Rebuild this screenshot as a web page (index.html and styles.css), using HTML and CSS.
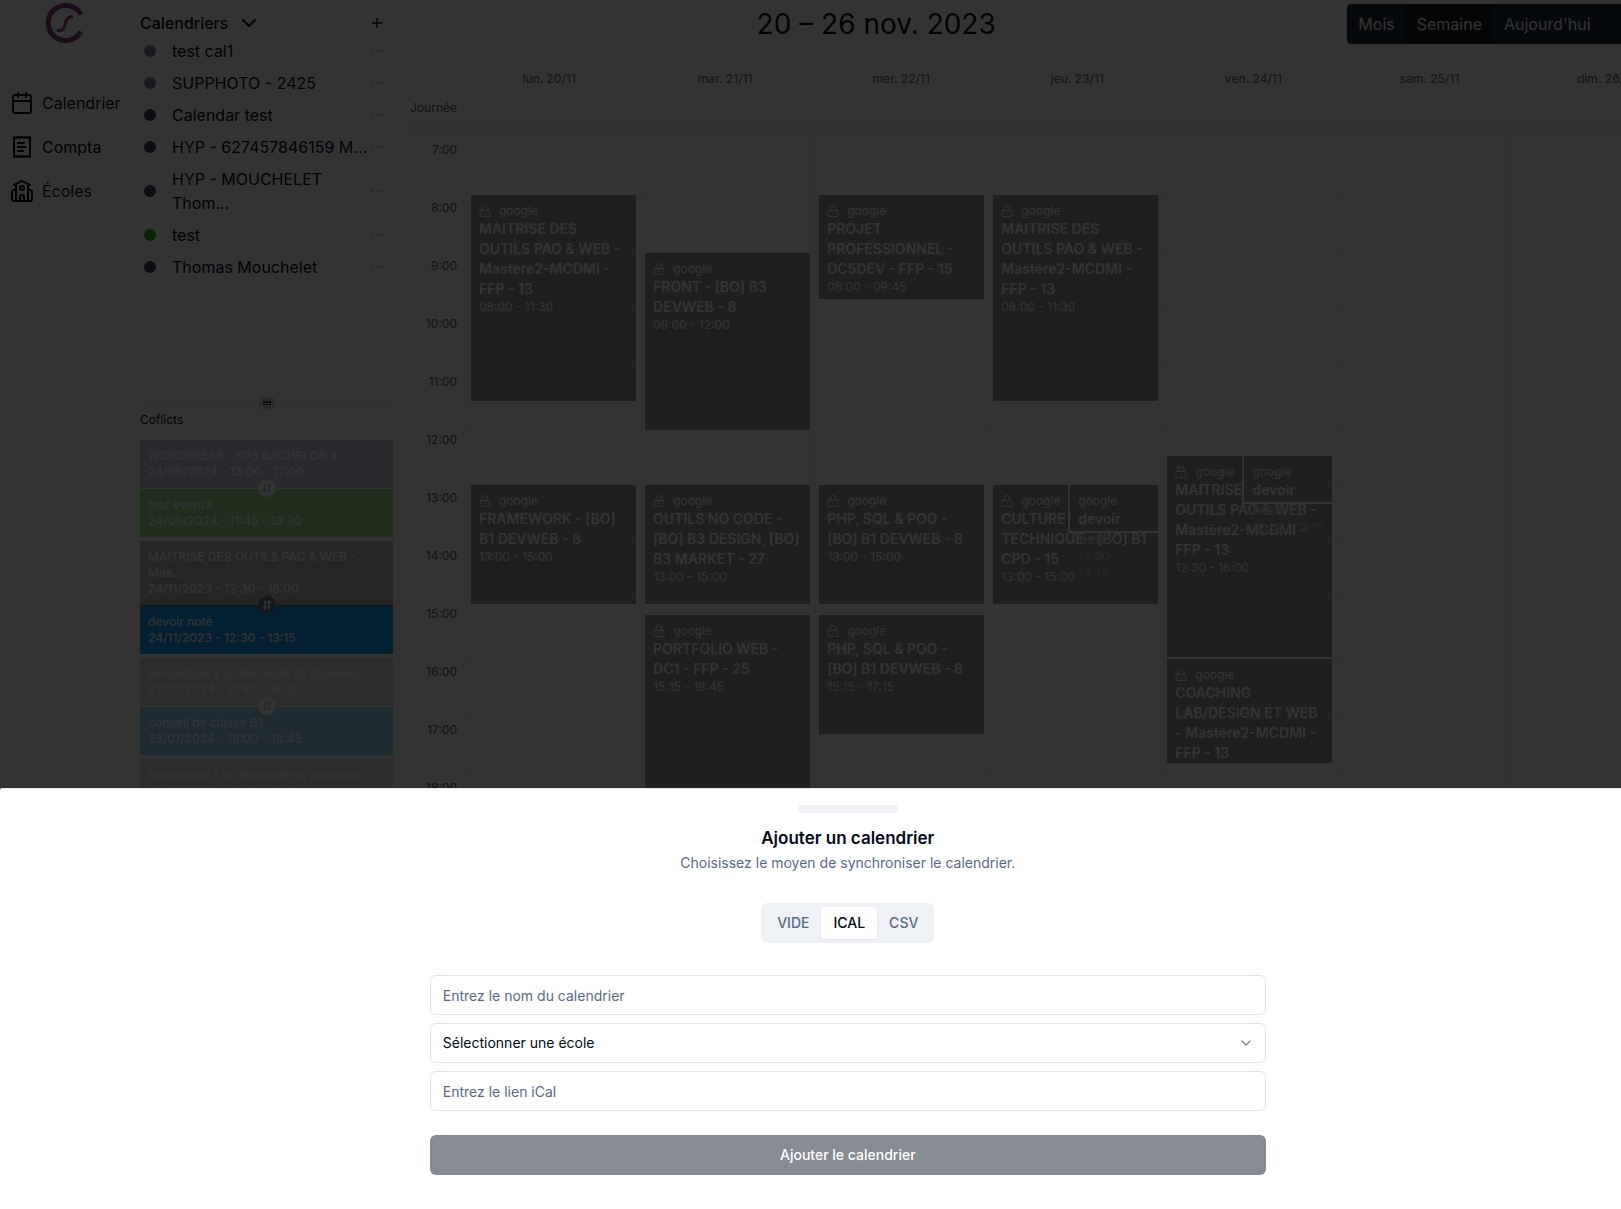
FILE: index.html
```html
<!DOCTYPE html>
<html lang="fr">
<head>
    <meta charset="UTF-8">
    <meta name="viewport" content="width=device-width, initial-scale=1.0">
    <title>Calendrier</title>
    <link rel="stylesheet" href="styles.css">
</head>
<body>

<!-- shared icons -->
<svg class="sprite" aria-hidden="true">
    <symbol id="lock" viewBox="0 0 24 24"><rect x="2" y="11" width="20" height="12" rx="1"/><path d="M6 11V7a6 6 0 0 1 12 0v4M12 16v2"/></symbol>
    <symbol id="dots" viewBox="0 0 24 24"><circle cx="5" cy="12" r="1"/><circle cx="12" cy="12" r="1"/><circle cx="19" cy="12" r="1"/></symbol>
    <symbol id="swap" viewBox="0 0 24 24"><path d="M8 4v16M5 17l3 3 3-3M16 20V4M13 7l3-3 3 3"/></symbol>
    <symbol id="chevron" viewBox="0 0 24 24"><path d="m6 9 6 6 6-6"/></symbol>
</svg>

<div class="page">
    <nav class="nav">
        <a href="#" class="logo" aria-label="Accueil">
            <svg viewBox="0 0 40 42" width="40" height="42">
                <path class="ring" d="M36 13.500A17.500 17.500 0 1 0 36 30.500"/>
                <path class="curve" d="M12 29c4 2 6.500 0 8-5.500s3-8.500 8-7.500"/>
            </svg>
        </a>
        <a href="#" class="nav-link">
            <svg class="icon" viewBox="0 0 24 24"><rect x="3" y="4" width="18" height="18" rx="2"/><path d="M3 10h18M8 2v4M16 2v4"/></svg>
            Calendrier
        </a>
        <a href="#" class="nav-link">
            <svg class="icon" viewBox="0 0 24 24"><path d="M4 2v20l2-1 2 1 2-1 2 1 2-1 2 1 2-1 2 1V2l-2 1-2-1-2 1-2-1-2 1-2-1-2 1ZM8 8h6M8 12h8M8 16h5"/></svg>
            Compta
        </a>
        <a href="#" class="nav-link">
            <svg class="icon" viewBox="0 0 24 24"><path d="M14 22v-4a2 2 0 1 0-4 0v4"/><path d="m18 10 3.500 1.600a1 1 0 0 1 .5 1V20a2 2 0 0 1-2 2H4a2 2 0 0 1-2-2v-7.400a1 1 0 0 1 .5-1L6 10M18 5v17M6 5v17M4 6l7-3.600a2 2 0 0 1 2 0L20 6"/><circle cx="12" cy="9" r="2"/></svg>
            Écoles
        </a>
    </nav>

    <aside class="sidebar">
        <div class="calendars">
            <div class="calendars-head">
                <button class="plain toggle">Calendriers <svg class="icon"><use href="#chevron"/></svg></button>
                <button class="plain" aria-label="Ajouter"><svg class="icon small" viewBox="0 0 24 24"><path d="M5 12h14M12 5v14"/></svg></button>
            </div>
            <ul class="calendar-list">
                <li><span class="dot purple"></span><span class="name">test cal1</span><button class="plain more" aria-label="Options"><svg class="icon small"><use href="#dots"/></svg></button></li>
                <li><span class="dot purple"></span><span class="name">SUPPHOTO - 2425</span><button class="plain more" aria-label="Options"><svg class="icon small"><use href="#dots"/></svg></button></li>
                <li><span class="dot"></span><span class="name">Calendar test</span><button class="plain more" aria-label="Options"><svg class="icon small"><use href="#dots"/></svg></button></li>
                <li><span class="dot"></span><span class="name">HYP - 627457846159 M...</span><button class="plain more" aria-label="Options"><svg class="icon small"><use href="#dots"/></svg></button></li>
                <li><span class="dot"></span><span class="name">HYP - MOUCHELET Thom...</span><button class="plain more" aria-label="Options"><svg class="icon small"><use href="#dots"/></svg></button></li>
                <li><span class="dot green"></span><span class="name">test</span><button class="plain more" aria-label="Options"><svg class="icon small"><use href="#dots"/></svg></button></li>
                <li><span class="dot"></span><span class="name">Thomas Mouchelet</span><button class="plain more" aria-label="Options"><svg class="icon small"><use href="#dots"/></svg></button></li>
            </ul>
        </div>

        <div class="splitter">
            <span class="grip"><svg viewBox="0 0 10 6" width="10" height="6"><path d="M1 1h2v2H1zM4 1h2v2H4zM7 1h2v2H7zM1 4h2v1H1zM4 4h2v1H4zM7 4h2v1H7z"/></svg></span>
        </div>

        <h2 class="conflicts-title">Coflicts</h2>
        <div class="conflict faded">
            <div class="card lilac">WORDPRESS - SP3 BACHELOR 3<br>24/09/2024 - 13:00 - 17:00</div>
            <div class="swap"><svg class="icon tiny"><use href="#swap"/></svg></div>
            <div class="card lime">test event3<br>24/09/2024 - 11:45 - 13:30</div>
        </div>
        <div class="conflict">
            <div class="card gray">MAITRISE DES OUTILS PAO &amp; WEB - Mas...<br>24/11/2023 - 12:30 - 16:00</div>
            <div class="swap"><svg class="icon tiny"><use href="#swap"/></svg></div>
            <div class="card blue">devoir noté<br>24/11/2023 - 12:30 - 13:15</div>
        </div>
        <div class="conflict faded">
            <div class="card silver">Annulation à la demande du planning...<br>23/01/2024 - 17:45 - 19:30</div>
            <div class="swap"><svg class="icon tiny"><use href="#swap"/></svg></div>
            <div class="card sky">conseil de classe B1<br>23/01/2024 - 18:00 - 18:45</div>
        </div>
        <div class="conflict faded">
            <div class="card silver">Annulation à la demande du planning...<br>23/02/2024 - 14:15 - 17:45</div>
        </div>
    </aside>

    <main class="agenda">
        <header class="toolbar">
            <div></div>
            <h1>20 – 26 nov. 2023</h1>
            <div class="views">
                <button>Mois</button>
                <button class="active">Semaine</button>
                <button>Aujourd'hui</button>
                <button class="step" aria-label="Précédent"><svg viewBox="0 0 6 10" width="6" height="10"><path d="M5 1 1 5l4 4"/></svg></button>
                <button class="step" aria-label="Suivant"><svg viewBox="0 0 6 10" width="6" height="10"><path d="m1 1 4 4-4 4"/></svg></button>
            </div>
        </header>

        <div class="days">
            <div></div>
            <div>lun. 20/11</div>
            <div>mar. 21/11</div>
            <div>mer. 22/11</div>
            <div>jeu. 23/11</div>
            <div>ven. 24/11</div>
            <div>sam. 25/11</div>
            <div>dim. 26/11</div>
        </div>
        <div class="allday">
            <div class="label">Journée</div>
            <div></div><div></div><div></div><div></div><div></div><div></div><div></div>
        </div>

        <!-- one grid row per quarter of an hour, row 1 is 7:00 -->
        <div class="week">
            <div class="hours">
                <div>7:00</div><div>8:00</div><div>9:00</div><div>10:00</div><div>11:00</div><div>12:00</div>
                <div>13:00</div><div>14:00</div><div>15:00</div><div>16:00</div><div>17:00</div><div>18:00</div><div>19:00</div>
            </div>
            <div class="day">
                <article class="event" style="grid-row: 5 / 19">
                    <p class="source"><svg class="icon lock"><use href="#lock"/></svg>google</p>
                    <h3>MAITRISE DES OUTILS PAO &amp; WEB - Mastère2-MCDMI - FFP - 13</h3>
                    <p>08:00 - 11:30</p>
                </article>
                <article class="event" style="grid-row: 25 / 33">
                    <p class="source"><svg class="icon lock"><use href="#lock"/></svg>google</p>
                    <h3>FRAMEWORK - [BO] B1 DEVWEB - 8</h3>
                    <p>13:00 - 15:00</p>
                </article>
            </div>
            <div class="day">
                <article class="event" style="grid-row: 9 / 21">
                    <p class="source"><svg class="icon lock"><use href="#lock"/></svg>google</p>
                    <h3>FRONT - [BO] B3 DEVWEB - 8</h3>
                    <p>09:00 - 12:00</p>
                </article>
                <article class="event" style="grid-row: 25 / 33">
                    <p class="source"><svg class="icon lock"><use href="#lock"/></svg>google</p>
                    <h3>OUTILS NO CODE - [BO] B3 DESIGN, [BO] B3 MARKET - 27</h3>
                    <p>13:00 - 15:00</p>
                </article>
                <article class="event" style="grid-row: 34 / 48">
                    <p class="source"><svg class="icon lock"><use href="#lock"/></svg>google</p>
                    <h3>PORTFOLIO WEB - DC1 - FFP - 25</h3>
                    <p>15:15 - 18:45</p>
                </article>
            </div>
            <div class="day">
                <article class="event" style="grid-row: 5 / 12">
                    <p class="source"><svg class="icon lock"><use href="#lock"/></svg>google</p>
                    <h3>PROJET PROFESSIONNEL - DC5DEV - FFP - 15</h3>
                    <p>08:00 - 09:45</p>
                </article>
                <article class="event" style="grid-row: 25 / 33">
                    <p class="source"><svg class="icon lock"><use href="#lock"/></svg>google</p>
                    <h3>PHP, SQL &amp; POO - [BO] B1 DEVWEB - 8</h3>
                    <p>13:00 - 15:00</p>
                </article>
                <article class="event" style="grid-row: 34 / 42">
                    <p class="source"><svg class="icon lock"><use href="#lock"/></svg>google</p>
                    <h3>PHP, SQL &amp; POO - [BO] B1 DEVWEB - 8</h3>
                    <p>15:15 - 17:15</p>
                </article>
            </div>
            <div class="day">
                <article class="event" style="grid-row: 5 / 19">
                    <p class="source"><svg class="icon lock"><use href="#lock"/></svg>google</p>
                    <h3>MAITRISE DES OUTILS PAO &amp; WEB - Mastère2-MCDMI - FFP - 13</h3>
                    <p>08:00 - 11:30</p>
                </article>
                <article class="event" style="grid-row: 25 / 33">
                    <p class="source"><svg class="icon lock"><use href="#lock"/></svg>google</p>
                    <h3>CULTURE TECHNIQUE - [BO] B1 CPD - 15</h3>
                    <p>13:00 - 15:00</p>
                </article>
                <article class="event half" style="grid-row: 25 / 28">
                    <p class="source">google</p>
                    <h3>devoir <span class="spill">noté</span></h3>
                    <p class="spill">13:00 - 13:45</p>
                </article>
            </div>
            <div class="day">
                <article class="event" style="grid-row: 23 / 37">
                    <p class="source"><svg class="icon lock"><use href="#lock"/></svg>google</p>
                    <h3>MAITRISE DES OUTILS PAO &amp; WEB - Mastère2-MCDMI - FFP - 13</h3>
                    <p>12:30 - 16:00</p>
                </article>
                <article class="event half" style="grid-row: 23 / 26">
                    <p class="source">google</p>
                    <h3>devoir <span class="spill">noté</span></h3>
                    <p class="spill">12:30 - 13:15</p>
                </article>
                <article class="event" style="grid-row: 37 / 44">
                    <p class="source"><svg class="icon lock"><use href="#lock"/></svg>google</p>
                    <h3>COACHING LAB/DESIGN ET WEB - Mastère2-MCDMI - FFP - 13</h3>
                </article>
            </div>
            <div class="day"></div>
            <div class="day"></div>
        </div>
    </main>

    <div class="overlay"></div>

    <section class="drawer" role="dialog" aria-labelledby="drawer-title">
        <div class="handle"></div>
        <h2 id="drawer-title">Ajouter un calendrier</h2>
        <p class="hint">Choisissez le moyen de synchroniser le calendrier.</p>
        <div class="tabs" role="tablist">
            <button role="tab">VIDE</button>
            <button role="tab" class="active" aria-selected="true">ICAL</button>
            <button role="tab">CSV</button>
        </div>
        <form class="form">
            <input type="text" aria-label="Nom du calendrier" placeholder="Entrez le nom du calendrier">
            <div class="select">
                <select aria-label="École">
                    <option>Sélectionner une école</option>
                </select>
                <svg class="icon small"><use href="#chevron"/></svg>
            </div>
            <input type="url" aria-label="Lien iCal" placeholder="Entrez le lien iCal">
            <button type="button" class="submit">Ajouter le calendrier</button>
        </form>
    </section>
</div>

</body>
</html>
```
FILE: styles.css
```css
* {
    box-sizing: border-box;
    margin: 0;
    padding: 0;
}

body {
    height: 100vh;
    overflow: hidden;
    background-color: #fff;
    color: #020817;
    font-family: Inter, "Liberation Sans", sans-serif;
    font-size: 16px;
    line-height: 24px;
}

button,
input,
select {
    font: inherit;
    color: inherit;
}

button {
    cursor: pointer;
    border: none;
}

a {
    color: inherit;
    text-decoration: none;
}

ul {
    list-style: none;
}

.sprite {
    display: none;
}

.icon {
    width: 24px;
    height: 24px;
    flex-shrink: 0;
    fill: none;
    stroke: currentColor;
    stroke-width: 2;
    stroke-linecap: round;
    stroke-linejoin: round;
}

.icon.small {
    width: 16px;
    height: 16px;
}

.icon.tiny {
    width: 12px;
    height: 12px;
    stroke-width: 3;
}

.plain {
    display: flex;
    align-items: center;
    background: none;
}

/* the week is a bit wider than the window */
.page {
    position: relative;
    display: flex;
    width: 104.6%;
    height: 100vh;
    overflow: hidden;
}

/* navigation */
.nav {
    display: flex;
    flex-direction: column;
    gap: 20px;
    width: 130px;
    padding: 1px 10px;
    flex-shrink: 0;
}

.logo {
    height: 70px;
    padding-left: 35px;
}

.logo path {
    fill: none;
    stroke: #8a3f86;
}

.logo .ring {
    stroke-width: 5;
}

.logo .curve {
    stroke-width: 3;
}

.nav-link {
    display: flex;
    align-items: center;
    gap: 8px;
}

/* sidebar */
.sidebar {
    width: 275px;
    padding: 0 12px 0 10px;
    flex-shrink: 0;
}

.calendars {
    height: 397px;
}

.calendars-head {
    display: flex;
    align-items: center;
    justify-content: space-between;
    height: 39px;
    padding: 7px 8px 0 0;
}

.toggle {
    gap: 9px;
    font-weight: 500;
}

.calendar-list {
    display: flex;
    flex-direction: column;
    gap: 8px;
}

.calendar-list li {
    display: flex;
    align-items: center;
    padding: 0 8px 0 4px;
}

.dot {
    width: 12px;
    height: 12px;
    margin-right: 16px;
    flex-shrink: 0;
    border-radius: 50%;
    background-color: #334155;
}

.dot.purple {
    background-color: #8874b0;
}

.dot.green {
    background-color: #2bb50c;
}

.name {
    flex: 1;
}

.more {
    color: #b4bcc8;
}

.splitter {
    display: flex;
    align-items: center;
    justify-content: center;
    height: 12px;
    background: linear-gradient(#e2e8f0, #e2e8f0) center / 100% 1px no-repeat;
}

.grip {
    display: flex;
    align-items: center;
    justify-content: center;
    width: 16px;
    height: 12px;
    border-radius: 3px;
    background-color: #d5dbe3;
}

.conflicts-title {
    height: 31px;
    padding-top: 3px;
    font-size: 12px;
    font-weight: 400;
    line-height: 16px;
}

.conflict {
    margin-bottom: 4px;
    background-color: #475569;
}

.conflict.faded {
    background-color: #fff;
}

.card {
    padding: 8px;
    color: #fff;
    font-size: 12px;
    font-weight: 500;
    line-height: 16px;
}

.card.lilac {
    background-color: #cdc5e2;
}

.card.lime {
    background-color: #9be087;
}

.card.gray {
    background-color: #b9b9b9;
}

.card.blue {
    background-color: #0ea0f0;
}

.card.silver {
    background-color: #d9d9d9;
}

.card.sky {
    background-color: #90cff0;
}

/* sits on the seam between two cards */
.swap {
    position: relative;
    display: flex;
    align-items: center;
    justify-content: center;
    width: 18px;
    height: 18px;
    margin: -9px auto -8px;
    border-radius: 50%;
    background-color: #64748b;
    color: #fff;
}

.faded .swap {
    background-color: #fff;
    color: #b4bcc8;
}

/* agenda */
.agenda {
    flex: 1;
    min-width: 0;
    padding: 4px 2px 0 0;
}

.toolbar {
    display: flex;
    align-items: center;
    justify-content: space-between;
    height: 40px;
    margin-bottom: 24px;
}

.toolbar h1 {
    font-size: 28px;
    font-weight: 400;
}

.views {
    display: flex;
    height: 40px;
    border-radius: 4px;
    overflow: hidden;
}

.views button {
    padding: 0 11px;
    background-color: #1e303f;
    color: #fff;
}

.views .active {
    background-color: #1a1c20;
}

.views .step {
    width: 46px;
}

.views svg {
    fill: none;
    stroke: #fff;
}

.days,
.allday {
    display: grid;
    grid-template-columns: 56px repeat(7, 1fr);
}

.days {
    height: 21px;
    color: #64748b;
    font-size: 12px;
    font-weight: 500;
    line-height: 22px;
    text-align: center;
}

.allday {
    height: 40px;
    border-bottom: 3px solid #f3f4f6;
}

.allday div + div {
    border-left: 1px solid #f3f4f6;
}

.label,
.hours {
    color: #475569;
    font-size: 12px;
    text-align: right;
}

.label {
    padding-right: 4px;
    line-height: 38px;
}

.week {
    display: grid;
    grid-template-columns: 62px repeat(7, 1fr);
    margin-top: 6px;
    padding-right: 8px;
    background: repeating-linear-gradient(#f3f4f6 0 1px, transparent 1px 58px);
}

.hours {
    line-height: 30px;
}

.hours div {
    height: 58px;
    padding-right: 10px;
}

.day {
    display: grid;
    grid-template-columns: 100%;
    grid-template-rows: repeat(26, 14px 15px);
    border-left: 1px solid #f3f4f6;
}

/* events run a little past their last row, the next one covers the rest */
.event {
    grid-column: 1;
    margin: 2px 5px -5px 3px;
    padding: 8px;
    overflow: hidden;
    background-color: #94999e;
    color: #fff;
    font-size: 12px;
    line-height: 16px;
    box-shadow: 0 0 0 2px #fff;
}

.event h3 {
    font-size: 14px;
    font-weight: 600;
    line-height: 20px;
}

.source {
    display: flex;
    align-items: center;
    gap: 8px;
}

.lock {
    width: 12px;
    height: 12px;
}

.event.half {
    justify-self: end;
    width: 88px;
    overflow: visible;
}

.spill {
    color: #c8ccd0;
}

.overlay {
    position: absolute;
    inset: 0;
    background-color: rgba(0, 0, 0, 0.8);
}

/* bottom drawer */
.drawer {
    position: absolute;
    right: 0;
    bottom: 0;
    left: 0;
    display: flex;
    flex-direction: column;
    align-items: center;
    padding: 16px 16px 34px;
    border-top: 1px solid #e2e8f0;
    border-radius: 2px 2px 0 0;
    background-color: #fff;
    font-size: 14px;
    line-height: 20px;
}

.handle {
    width: 100px;
    height: 8px;
    margin-bottom: 16px;
    border-radius: 4px;
    background-color: #eef2f7;
}

.drawer h2 {
    font-size: 17px;
    font-weight: 600;
    line-height: 18px;
}

.hint {
    margin: 6px 0 30px;
    color: #5a6a85;
}

.tabs {
    display: flex;
    height: 40px;
    margin-bottom: 32px;
    padding: 4px;
    border-radius: 6px;
    background-color: #eef2f7;
}

.tabs button {
    padding: 0 12px;
    border-radius: 4px;
    background: none;
    color: #5a6a85;
    font-weight: 500;
}

.tabs .active {
    background-color: #fff;
    color: #020817;
    box-shadow: 0 1px 2px rgba(0, 0, 0, 0.05);
}

.form {
    display: flex;
    flex-direction: column;
    gap: 8px;
    width: 100%;
    max-width: 836px;
}

.form input,
.form select {
    width: 100%;
    height: 40px;
    padding: 0 12px;
    border: 1px solid #dfe3ee;
    border-radius: 6px;
    background-color: #fff;
}

.form input::placeholder {
    color: #5a6a85;
}

.select {
    position: relative;
    display: flex;
}

.select select {
    appearance: none;
}

.select .icon {
    position: absolute;
    top: 12px;
    right: 12px;
    opacity: 0.5;
    pointer-events: none;
}

.submit {
    height: 40px;
    margin-top: 16px;
    border-radius: 6px;
    background-color: #878b94;
    color: #fff;
    font-weight: 500;
}
```
